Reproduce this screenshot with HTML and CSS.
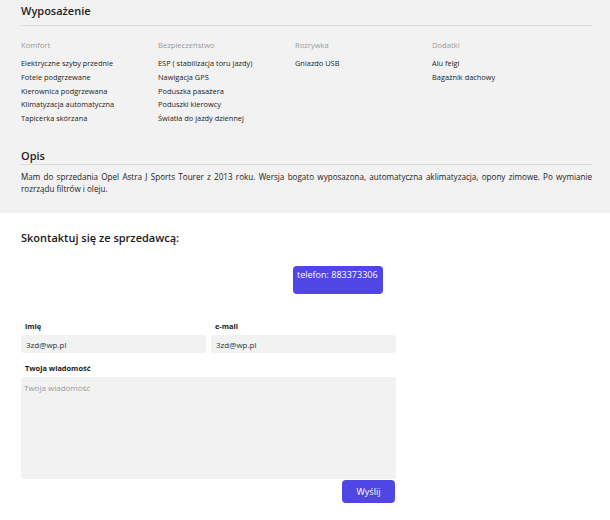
FILE: index.html
```html
<!DOCTYPE html>
<html lang="pl">
<head>
<meta charset="utf-8">
<link rel="stylesheet" href="styles.css">
</head>
<body>
<section class="details">
  <h2 class="sec-title">Wyposażenie</h2>
  <div class="features">
    <div class="col">
      <div class="cat">Komfort</div>
      <ul>
        <li>Elektryczne szyby przednie</li>
        <li>Fotele podgrzewane</li>
        <li>Kierownica podgrzewana</li>
        <li>Klimatyzacja automatyczna</li>
        <li>Tapicerka skórzana</li>
      </ul>
    </div>
    <div class="col">
      <div class="cat">Bezpieczeństwo</div>
      <ul>
        <li>ESP ( stabilizacja toru jazdy)</li>
        <li>Nawigacja GPS</li>
        <li>Poduszka pasażera</li>
        <li>Poduszki kierowcy</li>
        <li>Światła do jazdy dziennej</li>
      </ul>
    </div>
    <div class="col">
      <div class="cat">Rozrywka</div>
      <ul>
        <li>Gniazdo USB</li>
      </ul>
    </div>
    <div class="col">
      <div class="cat">Dodatki</div>
      <ul>
        <li>Alu felgi</li>
        <li>Bagażnik dachowy</li>
      </ul>
    </div>
  </div>
  <h2 class="sec-title opis">Opis</h2>
  <p class="desc">Mam do sprzedania Opel Astra J Sports Tourer z 2013 roku. Wersja bogato wyposazona, automatyczna aklimatyzacja, opony zimowe. Po wymianie rozrządu filtrów i oleju.</p>
</section>
<section class="contact">
  <h3 class="contact-title">Skontaktuj się ze sprzedawcą:</h3>
  <div class="phone-row"><button class="phone">telefon: 883373306</button></div>
  <form class="form">
    <div class="row">
      <label class="field">
        <span class="lbl">imię</span>
        <input class="inp" type="text" value="3zd@wp.pl">
      </label>
      <label class="field">
        <span class="lbl">e-mail</span>
        <input class="inp" type="text" value="3zd@wp.pl">
      </label>
    </div>
    <label class="field">
      <span class="lbl">Twoja wiadomość</span>
      <textarea class="txt" placeholder="Twoja wiadomość"></textarea>
    </label>
    <div class="send-row"><button class="send" type="button">Wyślij</button></div>
  </form>
</section>
</body>
</html>
```
FILE: styles.css
```css
* { box-sizing: border-box; }
html, body { margin: 0; padding: 0; }
body {
  width: 610px;
  height: 520px;
  overflow: hidden;
  background: #fff;
  font-family: "Open Sans", "Noto Sans", sans-serif;
  color: #222;
}
.details {
  background: #f2f2f2;
  padding: 3px 18px 0 21px;
  height: 213px;
}
.sec-title {
  margin: 0;
  font-size: 11px;
  font-weight: 600;
  line-height: 16px;
  color: #1f1f1f;
  padding-bottom: 6px;
  border-bottom: 1px solid #dcdcdc;
}
.features {
  display: grid;
  grid-template-columns: repeat(4, 137px);
  padding-top: 13px;
}
.cat {
  font-size: 7.6px;
  line-height: 12px;
  color: #9a9a9a;
  margin-bottom: 6px;
}
.col ul {
  list-style: none;
  margin: 0;
  padding: 0;
}
.col li {
  font-size: 7.4px;
  line-height: 13.75px;
  color: #222;
}
.opis {
  margin-top: 22px;
  padding-bottom: 0;
}
.desc {
  margin: 6px 0 0;
  font-size: 8.1px;
  line-height: 12px;
  text-align: justify;
  color: #222;
}
.contact {
  padding: 0 0 0 21px;
}
.contact-title {
  margin: 0;
  padding-top: 17px;
  font-size: 11px;
  font-weight: 600;
  line-height: 16px;
  color: #1a1a1a;
}
.phone-row {
  display: flex;
  padding-top: 20px;
  padding-left: 272px;
}
.phone {
  width: 90px;
  height: 28px;
  border: 0;
  border-radius: 4px;
  background: #4f46e5;
  color: #fff;
  font-family: "Open Sans", sans-serif;
  font-size: 9px;
  font-weight: 500;
  text-align: left;
  padding: 2px 0 0 4px;
  display: flex;
  align-items: flex-start;
}
.form {
  width: 375px;
  margin-top: 26px;
  display: flex;
  flex-direction: column;
}
.row {
  display: flex;
  gap: 5px;
}
.field {
  display: flex;
  flex-direction: column;
  flex: 1;
}
.lbl {
  font-size: 7.4px;
  font-weight: 700;
  line-height: 12px;
  padding-left: 4px;
  color: #1a1a1a;
  margin-bottom: 3px;
}
.inp {
  height: 18px;
  border: 0;
  border-radius: 3px;
  background: #f2f2f2;
  font-family: "Open Sans", sans-serif;
  font-size: 8px;
  color: #333;
  padding: 0 5px;
  margin-bottom: 9px;
}
.txt {
  height: 102px;
  border: 0;
  border-radius: 3px;
  background: #f2f2f2;
  font-family: "Open Sans", sans-serif;
  font-size: 8px;
  padding: 5px 3px;
  resize: none;
}
.txt::placeholder { color: #999; }
.send-row {
  display: flex;
  justify-content: flex-end;
  padding-right: 1px;
  margin-top: 1px;
}
.send {
  width: 53px;
  height: 23px;
  border: 0;
  border-radius: 4px;
  background: #4f46e5;
  color: #fff;
  font-family: "Open Sans", sans-serif;
  font-size: 9px;
  padding: 0;
}
```
